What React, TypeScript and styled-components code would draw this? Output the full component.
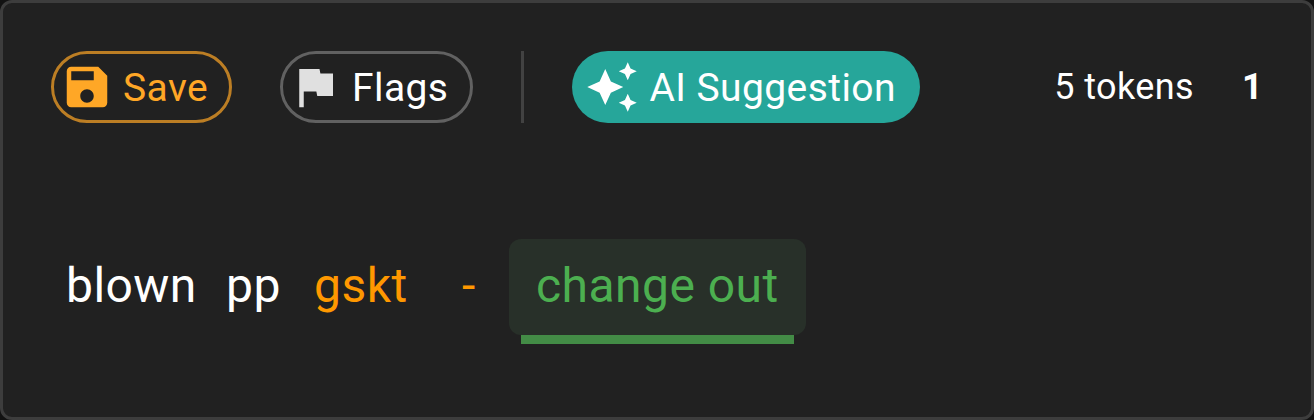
import React from "react";
import styled, { createGlobalStyle, css } from "styled-components";

const GlobalStyle = createGlobalStyle`
  *, *::before, *::after { box-sizing: border-box; }
  body {
    margin: 0;
    background: #121212;
    color: #fff;
    font-family: Roboto, sans-serif;
  }
`;

const Card = styled.main`
  width: 1314px;
  height: 420px;
  padding: 48px;
  border: 3px solid #3d3d3d;
  border-radius: 12px;
  background: #212121;
  overflow: hidden;
`;

const Toolbar = styled.header`
  display: flex;
  align-items: center;
  height: 72px;
`;

type Tone = "warning" | "neutral" | "assist";

const tones = {
  warning: css`
    width: 181px;
    padding-left: 6px;
    border: 3px solid rgba(255, 167, 38, 0.7);
    color: #ffa726;
  `,
  neutral: css`
    width: 192.5px;
    margin-left: 48px;
    padding-left: 5px;
    border: 3px solid #616161;
    color: #fff;
    svg { color: #e0e0e0; }
  `,
  assist: css`
    width: 348px;
    padding-left: 13px;
    background: #26a69a;
    color: #fff;
  `,
};

const Chip = styled.button<{ $tone: Tone }>`
  display: flex;
  align-items: center;
  flex: none;
  height: 72px;
  padding: 0;
  border: 0;
  border-radius: 36px;
  background: transparent;
  font: 400 39px/58px Roboto, sans-serif;
  white-space: nowrap;
  ${({ $tone }) => tones[$tone]}
`;

const Icon = styled.svg`
  flex: none;
  width: 54px;
  height: 54px;
  fill: currentColor;
`;

const ChipLabel = styled.span<{ $gap: number }>`
  margin-left: ${({ $gap }) => $gap}px;
  padding-top: 2px;
  letter-spacing: 0.42px;
`;

const Divider = styled.span`
  flex: none;
  width: 3px;
  height: 72px;
  margin: 0 48px;
  background: #424242;
`;

const Stats = styled.div`
  display: flex;
  gap: 48px;
  margin-left: auto;
  font-size: 36px;
  line-height: 60px;
  letter-spacing: 0.39px;
`;

const Count = styled.strong`
  font-weight: 700;
`;

const TokenRow = styled.section`
  display: flex;
  align-items: flex-start;
  margin-top: 116px;
  font-size: 48px;
  line-height: 70px;
  letter-spacing: 0.45px;
  white-space: nowrap;
`;

const Token = styled.span<{ $width: number; $color?: string }>`
  flex: none;
  width: ${({ $width }) => $width}px;
  padding: 12px 0 12px 15px;
  color: ${({ $color }) => $color ?? "#fff"};
`;

const Phrase = styled.span`
  display: flex;
  flex-direction: column;
  flex: none;
  width: 297px;
  color: #4caf50;
`;

const PhraseText = styled.span`
  height: 96px;
  padding: 12px 0 12px 27px;
  border-radius: 12px;
  background: #283029;
`;

const Underline = styled.span`
  height: 9px;
  margin: 0 12px;
  background: #438c46;
`;

export default function App() {
  return (
    <>
      <GlobalStyle />
      <Card>
        <Toolbar>
          <Chip $tone="warning">
            <Icon viewBox="0 0 24 24">
              <path d="M17 3H5c-1.11 0-2 .9-2 2v14c0 1.1.89 2 2 2h14c1.1 0 2-.9 2-2V7l-4-4zm-5 16c-1.66 0-3-1.34-3-3s1.34-3 3-3 3 1.34 3 3-1.34 3-3 3zm3-10H5V5h10v4z" />
            </Icon>
            <ChipLabel $gap={9}>Save</ChipLabel>
          </Chip>
          <Chip $tone="neutral">
            <Icon viewBox="0 0 24 24">
              <path d="M14.4 6L14 4H5v17h2v-7h5.6l.4 2h7V6z" />
            </Icon>
            <ChipLabel $gap={10}>Flags</ChipLabel>
          </Chip>
          <Divider />
          <Chip $tone="assist">
            <Icon viewBox="0 0 24 24">
              <path d="m19 9 1.25-2.75L23 5l-2.75-1.25L19 1l-1.25 2.75L15 5l2.75 1.25L19 9zm-7.5.5L9 4 6.5 9.5 1 12l5.5 2.5L9 20l2.5-5.5L17 12l-5.5-2.5zM19 15l-1.25 2.75L15 19l2.75 1.25L19 23l1.25-2.75L23 19l-2.75-1.25L19 15z" />
            </Icon>
            <ChipLabel $gap={11}>AI Suggestion</ChipLabel>
          </Chip>
          <Stats>
            <span>5 tokens</span>
            <Count>1</Count>
          </Stats>
        </Toolbar>
        <TokenRow>
          <Token $width={160}>blown</Token>
          <Token $width={88}>pp</Token>
          <Token $width={148} $color="#ff9800">gskt</Token>
          <Token $width={62} $color="#ff9800">-</Token>
          <Phrase>
            <PhraseText>change out</PhraseText>
            <Underline />
          </Phrase>
        </TokenRow>
      </Card>
    </>
  );
}
